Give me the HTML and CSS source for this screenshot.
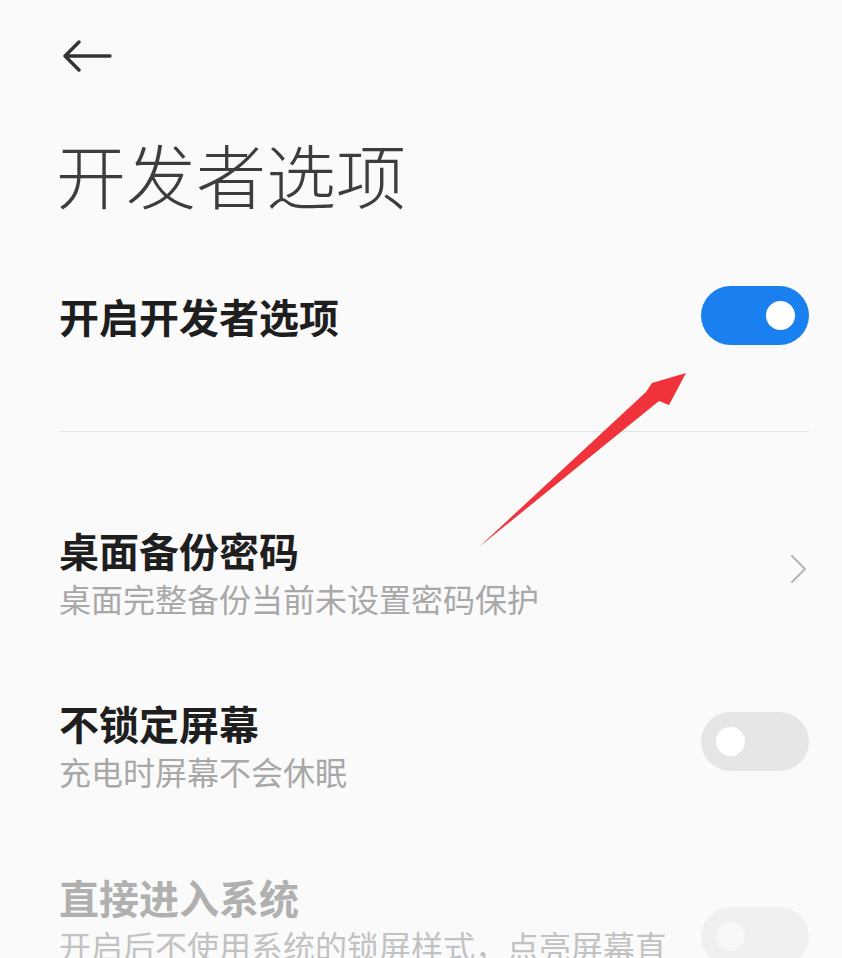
FILE: index.html
```html
<!DOCTYPE html>
<html lang="zh-CN">
<head>
<meta charset="utf-8">
<title>开发者选项</title>
<link rel="stylesheet" href="styles.css">
</head>
<body>
<div class="page">
  <div class="topbar">
    <svg class="back" width="50" height="32" viewBox="0 0 50 32">
      <path d="M3 16 H48 M17 2 L3 16 L17 30" fill="none" stroke="#333" stroke-width="3.4" stroke-linecap="round" stroke-linejoin="round"/>
    </svg>
  </div>
  <h1 class="title">开发者选项</h1>

  <div class="item first">
    <div class="text"><div class="t">开启开发者选项</div></div>
    <div class="switch on"><span class="knob"></span></div>
  </div>

  <div class="divider"></div>

  <div class="item row2">
    <div class="text">
      <div class="t">桌面备份密码</div>
      <div class="s">桌面完整备份当前未设置密码保护</div>
    </div>
    <svg class="chev" width="18" height="30" viewBox="0 0 18 30">
      <path d="M2 2 L15 15 L2 28" fill="none" stroke="#b8b8b8" stroke-width="2.2" stroke-linecap="round" stroke-linejoin="round"/>
    </svg>
  </div>

  <div class="item row3">
    <div class="text">
      <div class="t">不锁定屏幕</div>
      <div class="s">充电时屏幕不会休眠</div>
    </div>
    <div class="switch off top13"><span class="knob"></span></div>
  </div>

  <div class="item row4 disabled">
    <div class="text">
      <div class="t">直接进入系统</div>
      <div class="s">开启后不使用系统的锁屏样式，点亮屏幕直接进入系统</div>
    </div>
    <div class="switch off faint"><span class="knob"></span></div>
  </div>
</div>

<svg class="annot" width="842" height="958" viewBox="0 0 842 958">
  <polygon points="479,547 646,392 652,383 686,373 669,405 659,401" fill="#f0323a"/>
</svg>
</body>
</html>
```
FILE: styles.css
```css
html, body {
  margin: 0;
  padding: 0;
}
body {
  background: #fafafa;
  font-family: "Noto Sans CJK SC", "Noto Sans", sans-serif;
  width: 842px;
  height: 958px;
  overflow: hidden;
  position: relative;
}
.page {
  padding: 0 33px 0 59px;
}
.topbar {
  height: 102px;
  padding-top: 40px;
  box-sizing: border-box;
}
.back {
  display: block;
  margin-left: 3px;
}
.title {
  margin: 37px 0 0 -3px;
  font-size: 70px;
  line-height: 70px;
  height: 70px;
  font-weight: 300;
  color: #3d3d3d;
}
.item {
  display: flex;
  justify-content: space-between;
  align-items: center;
}
.item.first {
  margin-top: 77px;
}
.text {
  display: flex;
  flex-direction: column;
  max-width: 620px;
}
.t {
  font-size: 40px;
  line-height: 48px;
  font-weight: 700;
  color: #1e1e1e;
}
.s {
  font-size: 32px;
  line-height: 48px;
  color: #a8a8a8;
}
.switch {
  width: 108px;
  height: 59px;
  border-radius: 30px;
  position: relative;
  flex: none;
}
.switch .knob {
  position: absolute;
  top: 15px;
  width: 29px;
  height: 29px;
  border-radius: 50%;
  background: #fff;
}
.switch.on {
  background: #1a80f0;
}
.switch.on .knob {
  right: 14px;
}
.switch.off {
  background: #e6e6e6;
}
.switch.off .knob {
  left: 15px;
}
.switch.top13 {
  align-self: flex-start;
  margin-top: 13px;
}
.switch.faint {
  background: #f0f0f0;
  align-self: flex-start;
  margin-top: 34px;
}
.switch.faint .knob {
  background: #f7f7f7;
}
.divider {
  height: 1px;
  background: #e3e3e3;
  margin-top: 86px;
}
.row2 {
  margin-top: 94px;
}
.chev {
  display: block;
  margin-top: -10px;
  margin-right: 1px;
}
.row3 {
  margin-top: 77px;
}
.row4 {
  margin-top: 78px;
}
.disabled .t {
  color: #b0b0b0;
}
.disabled .s {
  color: #c2c2c2;
}
.annot {
  position: absolute;
  left: 0;
  top: 0;
  pointer-events: none;
}
```
